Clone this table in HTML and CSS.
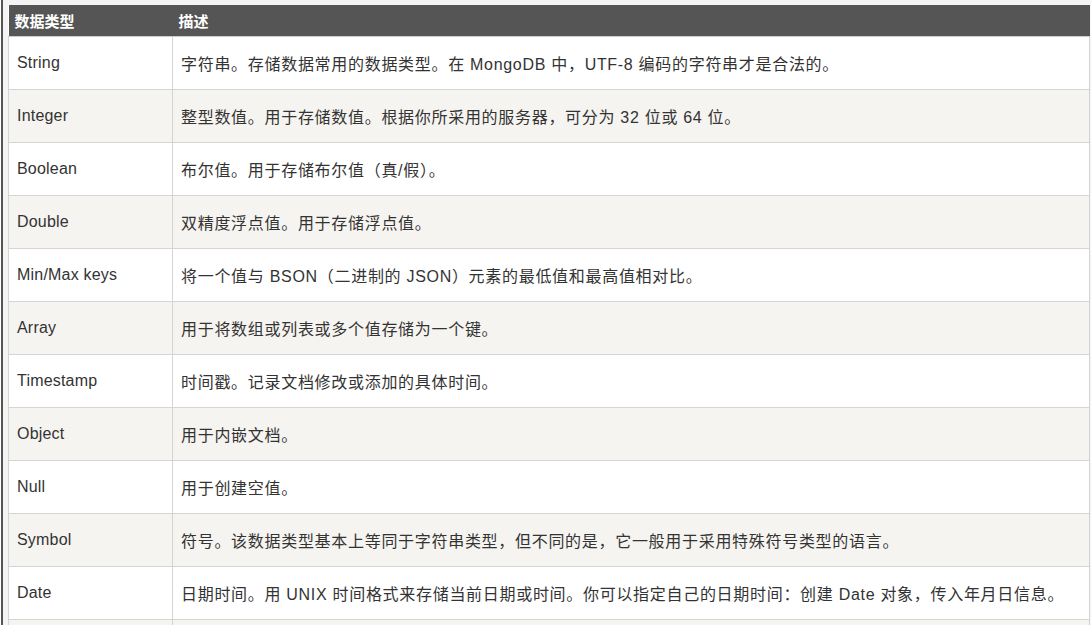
FILE: index.html
```html
<!DOCTYPE html>
<html lang="zh-CN">
<head>
    <meta charset="UTF-8">
    <title>MongoDB 数据类型</title>
    <link rel="stylesheet" href="styles.css">
</head>
<body>
    <div class="page">
        <table class="reference">
            <thead>
                <tr>
                    <th class="col-type">数据类型</th>
                    <th>描述</th>
                </tr>
            </thead>
            <tbody>
                <tr><td>String</td><td>字符串。存储数据常用的数据类型。在 MongoDB 中，UTF-8 编码的字符串才是合法的。</td></tr>
                <tr><td>Integer</td><td>整型数值。用于存储数值。根据你所采用的服务器，可分为 32 位或 64 位。</td></tr>
                <tr><td>Boolean</td><td>布尔值。用于存储布尔值（真/假）。</td></tr>
                <tr><td>Double</td><td>双精度浮点值。用于存储浮点值。</td></tr>
                <tr><td>Min/Max keys</td><td>将一个值与 BSON（二进制的 JSON）元素的最低值和最高值相对比。</td></tr>
                <tr><td>Array</td><td>用于将数组或列表或多个值存储为一个键。</td></tr>
                <tr><td>Timestamp</td><td>时间戳。记录文档修改或添加的具体时间。</td></tr>
                <tr><td>Object</td><td>用于内嵌文档。</td></tr>
                <tr><td>Null</td><td>用于创建空值。</td></tr>
                <tr><td>Symbol</td><td>符号。该数据类型基本上等同于字符串类型，但不同的是，它一般用于采用特殊符号类型的语言。</td></tr>
                <tr><td>Date</td><td>日期时间。用 UNIX 时间格式来存储当前日期或时间。你可以指定自己的日期时间：创建 Date 对象，传入年月日信息。</td></tr>
                <tr class="next-row"><td></td><td></td></tr>
            </tbody>
        </table>
    </div>
</body>
</html>
```

FILE: styles.css
```css
body {
    margin: 0;
    background: #fff;
    font-family: "Liberation Sans", Arial, "Noto Sans CJK SC", sans-serif;
    color: #333;
    overflow: hidden;
}

.page {
    margin-left: 1px;
    border-left: 2px solid #555;
    background: #f4f4f4;
    padding: 5px 1px 0 5px;
}

.reference {
    width: 1082px;
    border-collapse: collapse;
    background: #fff;
}

.reference th {
    background: #555;
    color: #fff;
    font-size: 15px;
    font-weight: bold;
    text-align: left;
    height: 31px;
    padding: 0 6px;
    border-bottom: 1px solid #ccc;
}

.reference th.col-type {
    width: 152px;
}

.reference td {
    font-size: 16px;
    height: 52px;
    padding: 0 8px;
    border: 1px solid #d4d4d4;
    vertical-align: middle;
    letter-spacing: 0.2px;
}

.reference td + td {
    letter-spacing: 0.7px;
}

.reference tbody tr:nth-child(even) {
    background: #f6f4f0;
}
```
